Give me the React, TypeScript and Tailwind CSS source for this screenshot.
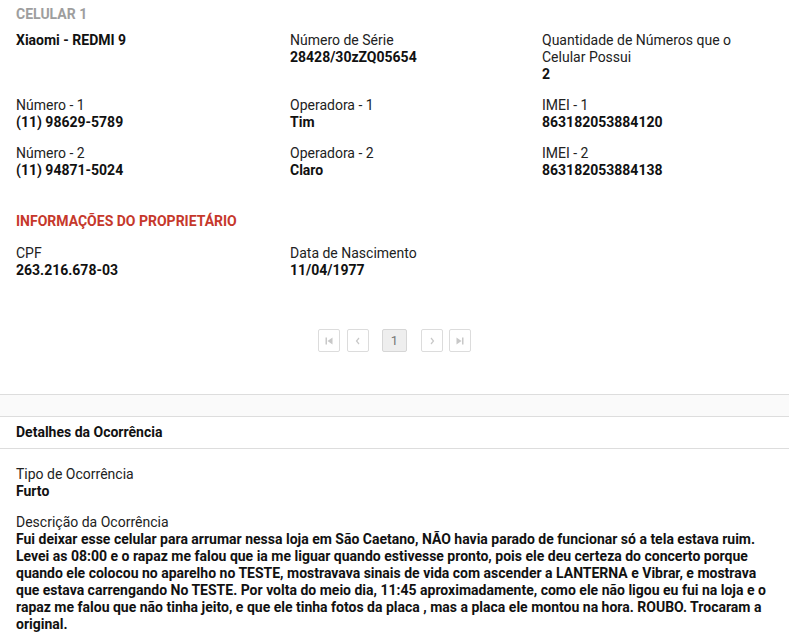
import React from 'react';

const font = { fontFamily: 'Roboto, "Liberation Sans", sans-serif' };

function Field({ label, value }: { label: string; value: string }) {
  return (
    <div>
      <div className="text-[#222]">{label}</div>
      <div className="font-bold text-[#111]">{value}</div>
    </div>
  );
}

function PageBtn({ children, className = '' }: { children: React.ReactNode; className?: string }) {
  return (
    <div className={`flex h-[23px] w-[22px] items-center justify-center rounded-[2px] border border-[#dcdcdc] bg-white text-[#c8c8c8] ${className}`}>
      {children}
    </div>
  );
}

export default function App() {
  return (
    <div className="min-h-[642px] w-[789px] bg-white text-[14px] leading-[17px]" style={font}>
      <div className="px-4 pt-[6px]">
        <div className="font-bold text-[#9e9e9e]">CELULAR 1</div>

        <div className="mt-[9px] grid grid-cols-[274px_252px_1fr] gap-y-[14px]">
          <div className="font-bold text-[#111]">Xiaomi - REDMI 9</div>
          <Field label="Número de Série" value="28428/30zZQ05654" />
          <div>
            <div className="text-[#222]">Quantidade de Números que o<br />Celular Possui</div>
            <div className="font-bold text-[#111]">2</div>
          </div>

          <Field label="Número - 1" value="(11) 98629-5789" />
          <Field label="Operadora - 1" value="Tim" />
          <Field label="IMEI - 1" value="863182053884120" />

          <Field label="Número - 2" value="(11) 94871-5024" />
          <Field label="Operadora - 2" value="Claro" />
          <Field label="IMEI - 2" value="863182053884138" />
        </div>

        <div className="mt-[34px] font-bold text-[#c6382b]">INFORMAÇÕES DO PROPRIETÁRIO</div>
        <div className="mt-[15px] grid grid-cols-[274px_252px_1fr]">
          <Field label="CPF" value="263.216.678-03" />
          <Field label="Data de Nascimento" value="11/04/1977" />
        </div>

        {/* paginação */}
        <div className="mt-[50px] flex justify-center">
          <div className="flex items-center">
            <PageBtn>
              <svg width="8" height="8" viewBox="0 0 8 8" fill="currentColor">
                <rect x="0.5" y="0.5" width="1.5" height="7" />
                <path d="M7.5 0.5 L2.5 4 L7.5 7.5 Z" />
              </svg>
            </PageBtn>
            <PageBtn className="ml-[7px]">
              <svg width="8" height="8" viewBox="0 0 8 8" fill="none" stroke="currentColor" strokeWidth="1.2">
                <path d="M5 1 L2.5 4 L5 7" />
              </svg>
            </PageBtn>
            <div className="ml-[13px] flex h-[23px] w-[25px] items-center justify-center rounded-[2px] border border-[#d6d6d6] bg-[#eeeeee] text-[13px] font-normal text-[#777]">
              1
            </div>
            <PageBtn className="ml-[14px]">
              <svg width="8" height="8" viewBox="0 0 8 8" fill="none" stroke="currentColor" strokeWidth="1.2">
                <path d="M3 1 L5.5 4 L3 7" />
              </svg>
            </PageBtn>
            <PageBtn className="ml-[6px]">
              <svg width="8" height="8" viewBox="0 0 8 8" fill="currentColor">
                <path d="M0.5 0.5 L5.5 4 L0.5 7.5 Z" />
                <rect x="6" y="0.5" width="1.5" height="7" />
              </svg>
            </PageBtn>
          </div>
        </div>
      </div>

      <div className="mt-[42px] h-[23px] border-y border-[#dddddd] bg-[#fafafa]" />
      <div className="flex h-[32px] items-center border-b border-[#dddddd] px-4 font-bold text-[#111]">
        Detalhes da Ocorrência
      </div>

      <div className="px-4 pt-[17px] pb-[8px]">
        <Field label="Tipo de Ocorrência" value="Furto" />
        <div className="mt-[14px]">
          <div className="text-[#222]">Descrição da Ocorrência</div>
          <div className="font-bold text-[#111]">
            Fui deixar esse celular para arrumar nessa loja em São Caetano, NÃO havia parado de funcionar só a tela estava ruim. Levei as 08:00 e o rapaz me falou que ia me liguar quando estivesse pronto, pois ele deu certeza do concerto porque quando ele colocou no aparelho no TESTE, mostravava sinais de vida com ascender a LANTERNA e Vibrar, e mostrava que estava carrengando No TESTE. Por volta do meio dia, 11:45 aproximadamente, como ele não ligou eu fui na loja e o rapaz me falou que não tinha jeito, e que ele tinha fotos da placa , mas a placa ele montou na hora. ROUBO. Trocaram a original.
          </div>
        </div>
      </div>
    </div>
  );
}
